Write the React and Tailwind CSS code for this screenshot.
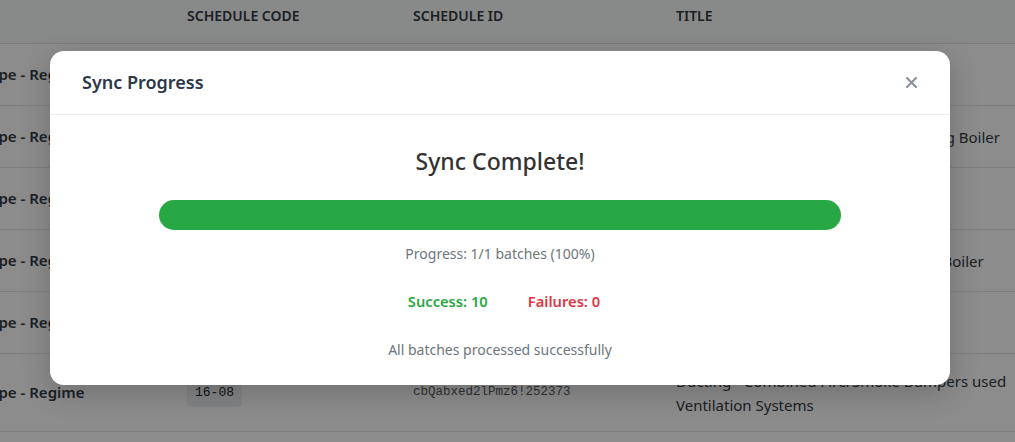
const ROWS = [
  { name: 'Type - Regime', code: '16-01', id: 'aXk2Lr9PqZw1!252301', title: 'Fire Alarms', tall: false },
  { name: 'Type - Regime', code: '16-02', id: 'bTq8Nv3HsYe4!252317', title: 'Heating - Natural Gas Fired Condensing Boiler', tall: false },
  { name: 'Type - Regime', code: '16-03', id: 'cMw5Rt7KdUo2!252329', title: 'Emergency Lighting', tall: false },
  { name: 'Type - Regime', code: '16-04', id: 'dPz1Gx6JfLa8!252341', title: 'Heating - Natural Gas Fired Standard  Boiler', tall: false },
  { name: 'Type - Regime', code: '16-05', id: 'eRb4Wc2QhNs6!252356', title: 'Water Hygiene', tall: false },
  { name: 'Type - Regime', code: '16-08', id: 'cbQabxed2lPmz6!252373', title: 'Ducting - Combined Fire/Smoke Dampers used Ventilation Systems', tall: true },
]

function ScheduleTable() {
  return (
    <div className="-ml-[18px] w-[1100px]">
      <div className="grid h-[44px] grid-cols-[205px_226px_263px_345px] border-b border-[#dee2e6] bg-[#f8f9fa] pt-[5px] text-[14px] font-semibold uppercase text-[#343a40]">
        <div></div>
        <div>Schedule Code</div>
        <div>Schedule ID</div>
        <div>Title</div>
      </div>
      {ROWS.map((row, i) => (
        <div
          key={i}
          className={`grid grid-cols-[205px_226px_263px_345px] items-center border-b border-[#e5e7eb] ${
            row.tall ? 'h-[78px]' : 'h-[62px]'
          }`}
        >
          <div className="whitespace-nowrap text-[15px] font-semibold text-[#343a40]">{row.name}</div>
          <div>
            <span className="inline-block rounded-[4px] bg-[#eef0f3] px-[8px] py-[4px] font-['Liberation_Mono',monospace] text-[13px] text-[#212529]">
              {row.code}
            </span>
          </div>
          <div className="font-['Liberation_Mono',monospace] text-[12.5px] text-[#555b61]">{row.id}</div>
          <div className={`text-[15px] leading-[24px] text-[#343a40] ${row.tall ? '' : 'whitespace-pre'}`}>{row.title}</div>
        </div>
      ))}
    </div>
  )
}

function SyncModal() {
  return (
    <div className="w-[900px] rounded-[14px] bg-white shadow-[0_8px_30px_rgba(0,0,0,0.2)]">
      <div className="flex h-[64px] items-center justify-between border-b border-[#e9ecef] pl-8 pr-[27px]">
        <h2 className="text-[18px] font-semibold text-[#2d3748]">Sync Progress</h2>
        <button className="flex h-6 w-6 items-center justify-center text-[#8a8f96]">
          <svg width="11" height="11" viewBox="0 0 11 11" fill="none" stroke="currentColor" strokeWidth="2" strokeLinecap="round">
            <path d="M1 1l9 9M10 1l-9 9" />
          </svg>
        </button>
      </div>
      <div className="flex flex-col items-center px-8 pt-[31px] pb-[25px]">
        <h3 className="text-[23px] font-medium leading-[30px] text-[#333]">Sync Complete!</h3>
        <div className="mt-[24px] h-[30px] w-[682px] rounded-full bg-[#e9ecef]">
          <div className="h-full rounded-full bg-[#28a745]" style={{ width: '100%' }}></div>
        </div>
        <p className="mt-[13px] text-[14px] leading-[21px] text-[#6c757d]">Progress: 1/1 batches (100%)</p>
        <div className="mt-[27px] flex gap-10 pl-[8px] text-[14.7px] font-semibold leading-[21px]">
          <span className="text-[#28a745]">Success: 10</span>
          <span className="text-[#dc3545]">Failures: 0</span>
        </div>
        <p className="mt-[27px] text-[14px] leading-[21px] text-[#6c757d]">All batches processed successfully</p>
      </div>
    </div>
  )
}

export default function App() {
  return (
    <div className="relative h-[442px] w-[1015px] overflow-hidden bg-white font-['Noto_Sans',sans-serif]">
      <ScheduleTable />
      <div className="absolute inset-0 flex items-start justify-center bg-black/45 pt-[51px] pr-[15px]">
        <SyncModal />
      </div>
    </div>
  )
}
